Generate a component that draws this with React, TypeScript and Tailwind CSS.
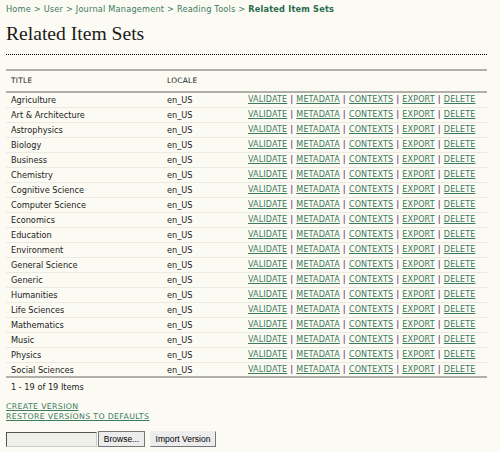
import React from "react";

const items = [
  "Agriculture",
  "Art & Architecture",
  "Astrophysics",
  "Biology",
  "Business",
  "Chemistry",
  "Cognitive Science",
  "Computer Science",
  "Economics",
  "Education",
  "Environment",
  "General Science",
  "Generic",
  "Humanities",
  "Life Sciences",
  "Mathematics",
  "Music",
  "Physics",
  "Social Sciences",
];

const actions = ["VALIDATE", "METADATA", "CONTEXTS", "EXPORT", "DELETE"];

function Sep() {
  return <span className="font-bold text-[#7d4b8c] px-[3px]">|</span>;
}

export default function App() {
  return (
    <div className="min-h-[452px] bg-[#fbfbf3] px-[6px] pt-[3px] font-['DejaVu_Sans',sans-serif] text-[8.2px] leading-[12px] text-[#222]">
      <div className="text-[#3c7a5e] tracking-[0.2px]">
        Home &gt; User &gt; Journal Management &gt; Reading Tools &gt;{" "}
        <span className="font-bold text-[#2a6b50]">Related Item Sets</span>
      </div>
      <h2 className="mt-[8px] font-['Liberation_Serif',serif] text-[19.6px] leading-[22px] text-[#1a1a1a] w-[481px] border-b border-dotted border-black pb-[9px]">
        Related Item Sets
      </h2>
      <div className="mt-[14px] w-[481px]">
        <div className="flex h-[24px] items-center border-y-2 border-[#b0b0a8] text-[7.4px] tracking-[0.3px]">
          <div className="w-[161px] pl-[5px]">TITLE</div>
          <div className="w-[81px]">LOCALE</div>
        </div>
        {items.map((t, i) => (
          <div
            key={t}
            className={`flex h-[15px] items-center ${i === items.length - 1 ? "border-b-2 border-[#b0b0a8]" : "border-b border-[#ebebe2]"}`}
          >
            <div className="w-[161px] pl-[5px]">{t}</div>
            <div className="w-[81px]">en_US</div>
            <div className="flex-1 text-[8px] tracking-[0.15px] text-[#3c7a5e]">
              {actions.map((a, j) => (
                <React.Fragment key={a}>
                  {j > 0 && <Sep />}
                  <span className="underline">{a}</span>
                </React.Fragment>
              ))}
            </div>
          </div>
        ))}
        <div className="pl-[5px] pt-[3px]">1 - 19 of 19 Items</div>
      </div>
      <div className="mt-[9px] text-[7.8px] leading-[10px] tracking-[0.35px] text-[#3c7a5e]">
        <div className="underline">CREATE VERSION</div>
        <div className="underline">RESTORE VERSIONS TO DEFAULTS</div>
      </div>
      <div className="mt-[9px] flex items-center">
        <div className="h-[15px] w-[91px] border border-[#555] border-r-[#ccc] border-b-[#ccc] bg-[#f0f0ea]" />
        <button className="ml-[1px] h-[16px] w-[47px] border border-[#777] bg-[#ececec] font-['Liberation_Sans',sans-serif] text-[8.5px] text-black">
          Browse...
        </button>
        <button className="ml-[5px] h-[16px] w-[66px] border border-[#777] border-l-[#eee] border-t-[#eee] bg-[#ececec] font-['Liberation_Sans',sans-serif] text-[8.5px] text-black">
          Import Version
        </button>
      </div>
    </div>
  );
}
